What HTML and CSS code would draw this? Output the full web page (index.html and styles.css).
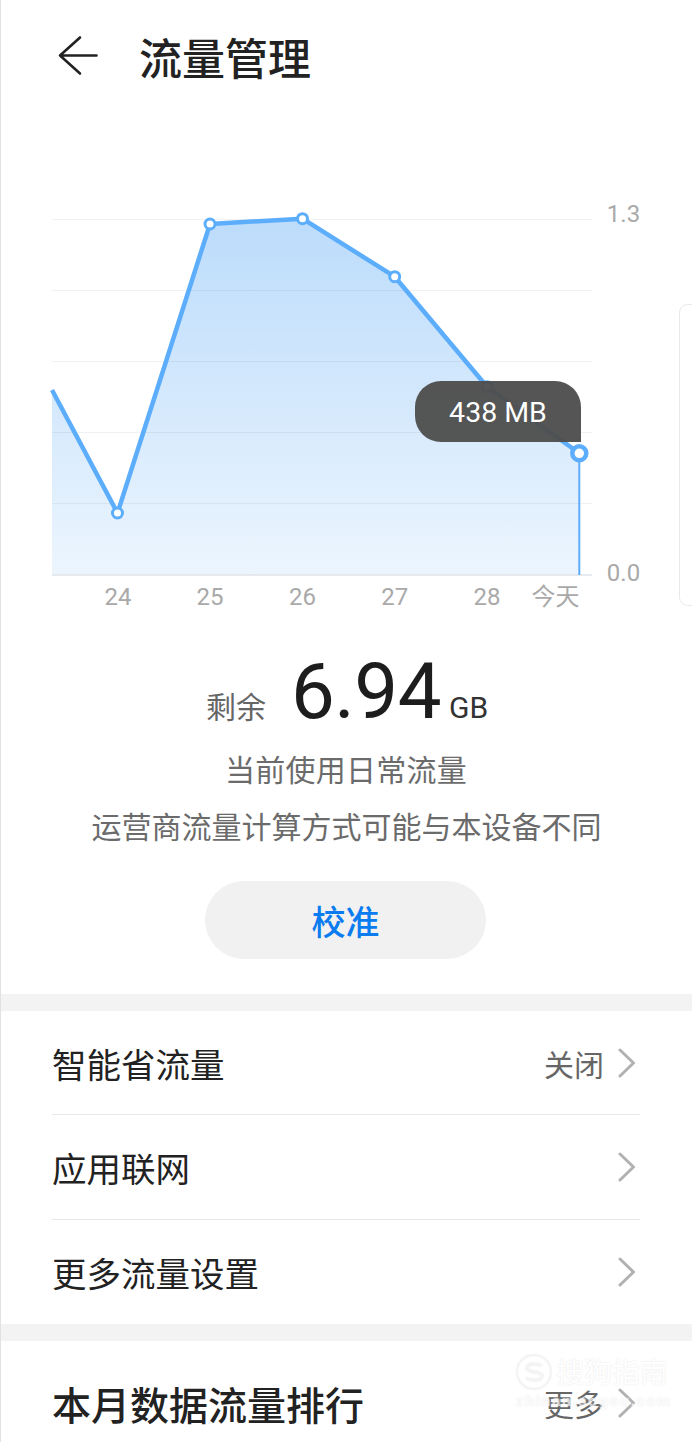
FILE: index.html
```html
<!DOCTYPE html>
<html lang="zh-CN">
<head>
<meta charset="utf-8">
<title>流量管理</title>
<link rel="stylesheet" href="styles.css">
</head>
<body>
<div class="page">
  <header class="header">
    <svg class="back" width="42" height="42" viewBox="0 0 42 42" fill="none" stroke="#222" stroke-width="2.6" stroke-linecap="round" stroke-linejoin="round"><path d="M38.500 20.500H2M22 2.500 2 20.500 22 38.500"/></svg>
    <h1 class="title">流量管理</h1>
  </header>

  <section class="chart">
    <svg class="chart-svg" width="691" height="430" viewBox="1 190 691 430">
      <defs>
        <linearGradient id="area" gradientUnits="userSpaceOnUse" x1="0" y1="219" x2="0" y2="575">
          <stop offset="0" stop-color="#bcdcfb"/>
          <stop offset="1" stop-color="#ecf5fe"/>
        </linearGradient>
      </defs>
      <path fill="url(#area)" d="M52 390 117.500 513 210 224 302.500 218.700 394.700 276.700 487 386.700 579.300 453.300V575H52Z"/>
      <g class="grid">
        <path d="M52 219.500H592M52 290.500H592M52 361.500H592M52 432.500H592M52 503.500H592"/>
      </g>
      <path class="axis" d="M52 575H592"/>
      <path class="drop" d="M579.300 453.300V575"/>
      <path class="line" d="M52 390 117.500 513 210 224 302.500 218.700 394.700 276.700 487 386.700 579.300 453.300"/>
      <g class="dots">
        <circle cx="117.500" cy="513" r="5"/>
        <circle cx="210" cy="224" r="5"/>
        <circle cx="302.500" cy="218.700" r="5"/>
        <circle cx="394.700" cy="276.700" r="5"/>
        <circle cx="487" cy="386.700" r="5"/>
      </g>
      <circle class="dot-now" cx="579.300" cy="453.300" r="7"/>
      <rect class="side-panel" x="679.500" y="304.500" width="30" height="301" rx="8"/>
      <g class="labels">
        <text x="623.500" y="222" text-anchor="middle">1.3</text>
        <text x="623.500" y="581" text-anchor="middle">0.0</text>
        <text x="118" y="605" text-anchor="middle">24</text>
        <text x="210" y="605" text-anchor="middle">25</text>
        <text x="302.500" y="605" text-anchor="middle">26</text>
        <text x="394.700" y="605" text-anchor="middle">27</text>
        <text x="487" y="605" text-anchor="middle">28</text>
        <text class="cjk" x="555.500" y="605" text-anchor="middle">今天</text>
      </g>
    </svg>
    <div class="tip">438 MB</div>
  </section>

  <section class="summary">
    <div class="remain">
      <span class="remain-label">剩余</span>
      <span class="remain-num">6.94</span>
      <span class="remain-unit">GB</span>
    </div>
    <p class="note note-first">当前使用日常流量</p>
    <p class="note note-second">运营商流量计算方式可能与本设备不同</p>
    <div class="calibrate">校准</div>
  </section>

  <section class="group">
    <div class="row">
      <span class="row-label">智能省流量</span>
      <span class="row-end"><span class="row-value">关闭</span><svg class="chev" width="18" height="30" viewBox="0 0 18 30"><path d="M2 2 15.500 15 2 28"/></svg></span>
    </div>
    <div class="row">
      <span class="row-label">应用联网</span>
      <span class="row-end"><svg class="chev" width="18" height="30" viewBox="0 0 18 30"><path d="M2 2 15.500 15 2 28"/></svg></span>
    </div>
    <div class="row">
      <span class="row-label">更多流量设置</span>
      <span class="row-end"><svg class="chev" width="18" height="30" viewBox="0 0 18 30"><path d="M2 2 15.500 15 2 28"/></svg></span>
    </div>
  </section>

  <section class="group rank">
    <div class="row rank-row">
      <span class="rank-label">本月数据流量排行</span>
      <span class="row-end"><span class="row-value">更多</span><svg class="chev" width="18" height="30" viewBox="0 0 18 30"><path d="M2 2 15.500 15 2 28"/></svg></span>
    </div>
  </section>

  <div class="mark">
    <svg class="mark-logo" width="38" height="38" viewBox="0 0 38 38" fill="none"><circle cx="19" cy="19" r="17" stroke-width="2.500"/><path d="M27 13c-4-3-15-3-15 2s15 3 15 8-11 5-16 2" stroke-width="4"/></svg>
    <div class="mark-text">
      <div class="mark-cn">搜狗指南</div>
      <div class="mark-en">zhinan.sogou.com</div>
    </div>
  </div>
</div>
</body>
</html>
```
FILE: styles.css
```css
* { box-sizing: border-box; }
html, body { margin: 0; padding: 0; background: #fff; }
body { font-family: "Noto Sans CJK SC", "Roboto", sans-serif; }
.page {
  position: relative;
  width: 692px;
  height: 1442px;
  overflow: hidden;
  border-left: 1px solid #e2e2e2;
  background: #fff;
}

.header {
  display: flex;
  align-items: center;
  height: 118px;
  padding-left: 57px;
  padding-bottom: 6px;
  gap: 39px;
}
.back { flex: none; }
.title {
  margin: 0;
  font-size: 43px;
  font-weight: 500;
  color: #222;
  line-height: 60px;
}

.chart { position: relative; height: 502px; padding-top: 72px; }
.chart-svg { display: block; }
.grid path { fill: none; stroke: #000; stroke-opacity: .05; stroke-width: 1; }
.axis { fill: none; stroke: #dfe3e8; stroke-width: 1.5; }
.drop { fill: none; stroke: #5cadfb; stroke-width: 2; }
.line { fill: none; stroke: #5cadfb; stroke-width: 4.500; stroke-linejoin: round; }
.dots circle { fill: #fff; stroke: #5cadfb; stroke-width: 3; }
.dot-now { fill: #fff; stroke: #5cadfb; stroke-width: 4.500; }
.side-panel { fill: #fff; stroke: #e9e9e9; stroke-width: 1; }
.labels text { font-family: "Roboto", sans-serif; font-size: 24px; fill: #a9a9a9; }
.labels .cjk { font-family: "Noto Sans CJK SC", sans-serif; }

.tip {
  position: absolute;
  left: 414px;
  top: 263px;
  width: 166px;
  height: 61px;
  border-radius: 26px 26px 0 26px;
  background: rgba(78, 78, 78, .96);
  color: #fff;
  font-family: "Roboto", sans-serif;
  font-size: 28.500px;
  line-height: 63px;
  text-align: center;
}

.summary { display: flex; flex-direction: column; align-items: center; height: 374px; }
.remain { display: flex; align-items: baseline; height: 114px; padding-top: 15px; margin-left: 1px; margin-top: 12px; }
.remain-label { font-size: 30px; color: #666; margin-right: 25px; }
.remain-num { font-family: "Roboto", sans-serif; font-size: 78px; font-weight: 400; color: #1d1d1d; line-height: 90px; letter-spacing: -.5px; }
.remain-unit { font-family: "Roboto", sans-serif; font-size: 30px; color: #333; margin-left: 8px; }
.note { margin: 0; font-size: 30px; line-height: 44px; color: #6b6b6b; }
.note-first { letter-spacing: .25px; margin-left: -1px; }
.note-second { margin-top: 13px; }
.calibrate {
  display: flex;
  align-items: center;
  justify-content: center;
  width: 281px;
  height: 78px;
  margin-top: 34px;
  margin-left: -2px;
  border-radius: 39px;
  background: #f1f1f1;
  color: #0a7cf0;
  font-size: 34px;
  font-weight: 500;
}

.group { border-top: 17px solid #f3f3f3; padding: 0 52px 0 51px; }
.row {
  display: flex;
  align-items: center;
  justify-content: space-between;
  height: 104.400px;
  border-bottom: 1.500px solid #e8e8e8;
}
.row:last-child { border-bottom: none; }
.row-label { font-size: 34.500px; color: #222; }
.row-end { display: flex; align-items: center; }
.row-value { font-size: 30px; color: #666; margin-right: 14px; }
.chev { display: block; margin-right: 4px; fill: none; stroke: #b1b1b1; stroke-width: 3; stroke-linecap: round; stroke-linejoin: round; }
.rank-row { height: 124px; border-bottom: none; }
.rank-label { font-size: 39px; font-weight: 500; color: #222; }

.mark {
  position: absolute;
  left: 514px;
  top: 1353px;
  display: flex;
  align-items: flex-start;
  gap: 3px;
  width: 160px;
  opacity: .8;
}
.mark-logo { flex: none; stroke: #f2f2f2; }
.mark-text { display: flex; flex-direction: column; }
.mark-cn { font-size: 28px; line-height: 36px; color: #fff; text-shadow: 0 0 2px #e0e0e0; white-space: nowrap; }
.mark-en {
  margin-left: -40px;
  margin-top: 3px;
  font-family: "Liberation Sans", sans-serif;
  font-size: 15px;
  font-weight: 700;
  line-height: 18px;
  letter-spacing: 1.500px;
  color: rgba(255, 255, 255, .8);
  text-shadow: 0 0 2px #e4e4e4;
  white-space: nowrap;
}
```
